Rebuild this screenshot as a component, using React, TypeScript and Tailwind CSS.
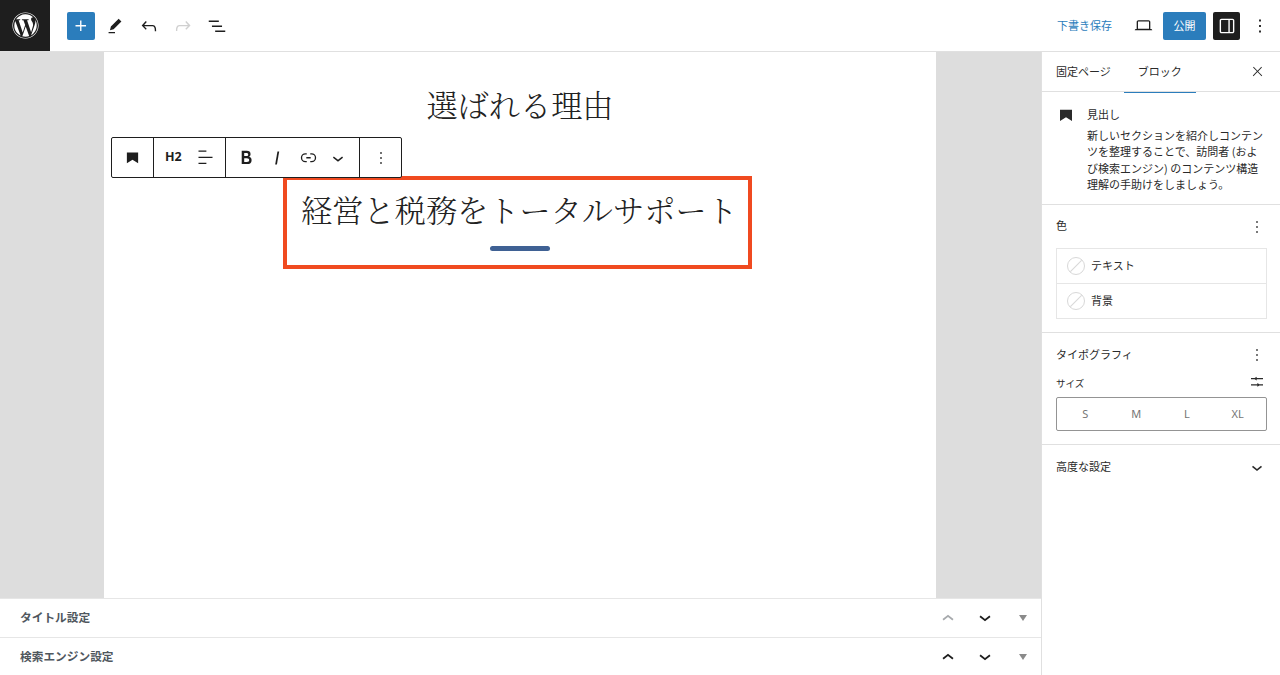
import React from "react";
import { FaWordpress } from "react-icons/fa";

const P = ({ d, size = 24, className = "" }: { d: string; size?: number; className?: string }) => (
  <svg width={size} height={size} viewBox="0 0 24 24" fill="currentColor" className={"shrink-0 " + className}><path d={d} /></svg>
);
const I = {
  plus: "M11 12.5V17.5H12.5V12.5H17.5V11H12.5V6H11V11H6V12.5H11Z",
  pencil: "m19 7-3-3-8.5 8.5-1 4 4-1L19 7Zm-7 11.5H5V20h7v-1.5Z",
  undo: "M18.3 11.7c-.6-.6-1.4-.9-2.3-.9H6.7l2.9-3.3-1.1-1-4.5 5L8.5 16l1-1-2.7-2.7H16c.5 0 .9.2 1.3.5 1 1 1 3.4 1 4.5v.3h1.5v-.2c0-1.5 0-4.3-1.5-5.7z",
  redo: "M15.6 6.5l-1.1 1 2.9 3.3H8c-.9 0-1.7.3-2.3.9-1.4 1.5-1.4 4.2-1.4 5.6v.2h1.5v-.3c0-1.1 0-3.5 1-4.5.3-.3.7-.5 1.3-.5h9.2L14.5 15l1.1 1.1 4.6-4.6-4.6-5z",
  list: "M3 6h11v1.5H3V6Zm3.5 5.5h11V13h-11v-1.5ZM21 17H10v1.5h11V17Z",
  laptop: "M20.5 16h-.7V8c0-1.1-.9-2-2-2H6.2c-1.1 0-2 .9-2 2v8h-.7c-.8 0-1.5.7-1.5 1.5h20c0-.8-.7-1.5-1.5-1.5zM5.7 8c0-.3.2-.5.5-.5h11.6c.3 0 .5.2.5.5v7.6H5.7V8z",
  sidebar: "M18 4H6c-1.1 0-2 .9-2 2v12c0 1.1.9 2 2 2h12c1.1 0 2-.9 2-2V6c0-1.1-.9-2-2-2zm.5 14c0 .3-.2.5-.5.5H6c-.3 0-.5-.2-.5-.5V6c0-.3.2-.5.5-.5h12c.3 0 .5.2.5.5v12zM15 5.5h-1.5v13H15v-13z",
  dots: "M13 19h-2v-2h2v2zm0-6h-2v-2h2v2zm0-6h-2V5h2v2z",
  close: "M13 11.8l6.1-6.3-1-1-6.1 6.2-6.1-6.3-1 1 6.1 6.3-6.5 6.7 1 1 6.5-6.6 6.5 6.6 1-1z",
  chevron: "M17.5 11.6L12 16l-5.5-4.4.9-1.2L12 14l4.5-3.6 1 1.2z",
  chevronBold: "M18 10.8 12 15.6 6 10.8l1.2-1.5 4.8 3.8 4.8-3.8 1.2 1.5z",
  chevronUpBold: "M6 13.2 12 8.4l6 4.8-1.2 1.5-4.8-3.8-4.8 3.8L6 13.2z",
  bookmark: "M3 4h18v17l-9-5.5L3 21V4z",
  align: "M13 5.5H4V4h9v1.5Zm7 7H4V11h16v1.5Zm-7 7H4V18h9v1.5Z",
  bold: "M14.7 11.3c1-.6 1.5-1.6 1.5-3 0-2.3-1.3-3.4-4-3.4H7v14h5.8c1.4 0 2.5-.3 3.3-1 .8-.7 1.2-1.7 1.2-2.9.1-1.9-.8-3.1-2.6-3.7zm-5.1-4h2.3c.6 0 1.1.1 1.4.4.3.3.5.7.5 1.2s-.2 1-.5 1.2c-.3.3-.8.4-1.4.4H9.6V7.3zm4.6 9c-.4.3-1 .4-1.7.4H9.6v-3.9h2.9c.7 0 1.3.2 1.7.5.4.3.6.8.6 1.5s-.2 1.2-.6 1.5z",
  italic: "M12.5 5L10 19h1.9l2.5-14z",
  link: "M10 17.389H8.444A5.194 5.194 0 1 1 8.444 7H10v1.5H8.444a3.694 3.694 0 0 0 0 7.389H10v1.5ZM14 7h1.556a5.194 5.194 0 0 1 0 10.39H14v-1.5h1.556a3.694 3.694 0 0 0 0-7.39H14V7Zm-4.5 6h5v-1.5h-5V13Z",
  sliders: "M3 6h5.5l3-2v2H21v1.8h-9.5v2l-3-2H3V6Zm0 9.5h9.5v-2l3 2H21v1.8h-5.5l-3 2v-2H3v-1.8Z",
};

const Swatch = () => (
  <span className="relative block size-[18px] rounded-full border border-[#d8d8d8] overflow-hidden shrink-0">
    <span className="absolute left-1/2 top-1/2 h-px w-[18px] -translate-x-1/2 -translate-y-1/2 -rotate-45 bg-[#d8d8d8]" />
  </span>
);

const MetaRow = ({ label, upMuted, h }: { label: string; upMuted?: boolean; h: string }) => (
  <div className={"flex items-center border-t border-[#e6e6e6] bg-white pl-5 pr-[14px] " + h}>
    <span className="-mt-[2px] flex-1 text-[11.7px] font-bold text-[#50575e]">{label}</span>
    <P d={I.chevronUpBold} size={22} className={upMuted ? "text-[#a7aaad] mr-[15px]" : "text-[#1e1e1e] mr-[15px]"} />
    <P d={I.chevronBold} size={22} className="text-[#1e1e1e] mr-[23px]" />
    <span className="h-0 w-0 border-x-[4px] border-t-[6px] border-x-transparent border-t-[#8a8a8a]" />
  </div>
);

export default function App() {
  return (
    <div className="flex h-[675px] w-[1280px] flex-col overflow-hidden bg-white text-[#1e1e1e] font-['Noto_Sans_CJK_JP','Noto_Sans',sans-serif]">
      <header className="flex h-[52px] shrink-0 items-center border-b border-[#e0e0e0] bg-white">
        <div className="flex h-[51px] w-[50px] items-center justify-center bg-[#1e1e1e] text-white"><FaWordpress size={27} /></div>
        <button className="ml-[17px] flex size-[28px] items-center justify-center rounded-[2px] bg-[#2b7dbc] text-white"><P d={I.plus} size={22} /></button>
        <P d={I.pencil} size={22} className="ml-[9px]" />
        <P d={I.undo} size={22} className="ml-[12px]" />
        <P d={I.redo} size={22} className="ml-[12px] text-[#d0d0d0]" />
        <P d={I.list} size={22} className="ml-[12px]" />
        <div className="flex-1" />
        <span className="text-[11px] text-[#2b7dbc]">下書き保存</span>
        <P d={I.laptop} size={21} className="ml-[21px]" />
        <button className="ml-[9px] flex h-[28px] w-[43px] items-center justify-center rounded-[2px] bg-[#2b7dbc] text-[11px] text-white">公開</button>
        <button className="ml-[7px] flex h-[28px] w-[27px] items-center justify-center rounded-[2px] bg-[#1e1e1e] text-white"><P d={I.sidebar} size={22} /></button>
        <P d={I.dots} size={22} className="ml-[9px] mr-[9px]" />
      </header>

      <div className="flex min-h-0 flex-1">
        <main className="flex min-w-0 flex-1 flex-col">
          <div className="min-h-0 flex-1 bg-[#dddddd] pl-[104px] pr-[105px]">
            <div className="relative h-full bg-white pt-[30px] font-['Noto_Serif_CJK_JP','Noto_Sans_CJK_JP',serif] text-[#222]">
              <h1 className="text-center text-[31.2px] leading-[44px] font-light">選ばれる理由</h1>
              <div className="ml-[179px] mt-[51px] -translate-y-px flex h-[93px] w-[469px] flex-col items-center border-4 border-[#f04a20] pl-[4px] pt-[7px]">
                <h2 className="whitespace-nowrap text-center text-[31.2px] leading-[44px] font-light">経営と税務をトータルサポート</h2>
                <span className="mt-[15px] h-[5px] w-[60px] rounded-full bg-[#3f6194]" />
              </div>
              <div className="absolute left-[7px] top-[85px] flex h-[41px] rounded-[2px] border border-[#1e1e1e] bg-white font-['Noto_Sans','Noto_Sans_CJK_JP',sans-serif] text-[#1e1e1e]">
                <div className="flex w-[42px] items-center justify-center border-r border-[#1e1e1e]"><P d={I.bookmark} size={15} /></div>
                <div className="flex w-[72px] items-center border-r border-[#1e1e1e] pl-[11px]">
                  <span className="text-[12.5px] font-bold">H2</span>
                  <P d={I.align} size={21} className="ml-[13px]" />
                </div>
                <div className="flex w-[134px] items-center border-r border-[#1e1e1e] pl-[9px]">
                  <P d={I.bold} size={23} />
                  <P d={I.italic} size={22} className="ml-[8px]" />
                  <P d={I.link} size={21} className="ml-[10px]" />
                  <P d={I.chevron} size={22} className="ml-[8px]" />
                </div>
                <div className="flex w-[41px] items-center justify-center"><P d={I.dots} size={20} /></div>
              </div>
            </div>
          </div>
          <div className="shrink-0">
            <MetaRow label="タイトル設定" upMuted h="h-[39px]" />
            <MetaRow label="検索エンジン設定" h="h-[38px]" />
          </div>
        </main>

        <aside className="w-[239px] shrink-0 border-l border-[#e0e0e0] bg-white text-[11px] text-[#2a2a2a]">
          <div className="flex h-[40px] items-center border-b border-[#e0e0e0]">
            <span className="ml-[14px]">固定ページ</span>
            <span className="relative ml-[13px] flex h-[40px] w-[72px] items-center justify-center after:absolute after:bottom-[-1px] after:left-0 after:h-px after:w-full after:bg-[#2b7dbc]">ブロック</span>
            <P d={I.close} size={15} className="ml-auto mr-[15px]" />
          </div>
          <div className="flex h-[113px] border-b border-[#e0e0e0] pl-[16px] pt-[12px]">
            <P d={I.bookmark} size={16} className="mt-[3px]" />
            <div className="ml-[13px] w-[181px]">
              <div className="leading-[20px]">見出し</div>
              <p className="mt-[3px] leading-[16.4px]">新しいセクションを紹介しコンテンツを整理することで、訪問者 (および検索エンジン) のコンテンツ構造理解の手助けをしましょう。</p>
            </div>
          </div>
          <div className="h-[128px] border-b border-[#e0e0e0] px-[14px]">
            <div className="flex h-[43px] items-center justify-between"><span className="-mt-[2px]">色</span><P d={I.dots} size={20} className="-mr-px" /></div>
            <div className="w-[211px] border border-[#e6e6e6]">
              <div className="flex h-[35px] items-center gap-[6px] border-b border-[#e6e6e6] pl-[10px]"><Swatch /><span className="-mt-[2px]">テキスト</span></div>
              <div className="flex h-[34px] items-center gap-[6px] pl-[10px]"><Swatch /><span className="-mt-[2px]">背景</span></div>
            </div>
          </div>
          <div className="h-[112px] border-b border-[#e0e0e0] px-[14px]">
            <div className="flex h-[43px] items-center justify-between"><span className="-mt-[1px]">タイポグラフィ</span><P d={I.dots} size={20} className="-mr-px" /></div>
            <div className="-mt-[3px] flex h-[20px] items-center justify-between"><span className="text-[9.5px]">サイズ</span><P d={I.sliders} size={16} className="mr-[1px] -translate-y-px" /></div>
            <div className="mt-[4px] grid h-[34px] w-[211px] grid-cols-4 items-center rounded-[2px] border border-[#949494] px-[3px] text-center text-[11px] text-[#757575] font-['Noto_Sans',sans-serif]">
              <span>S</span><span>M</span><span>L</span><span>XL</span>
            </div>
          </div>
          <div className="flex h-[45px] items-center justify-between px-[14px]"><span className="-mt-[2px]">高度な設定</span><P d={I.chevronBold} size={20} className="-mr-px" /></div>
        </aside>
      </div>
    </div>
  );
}
